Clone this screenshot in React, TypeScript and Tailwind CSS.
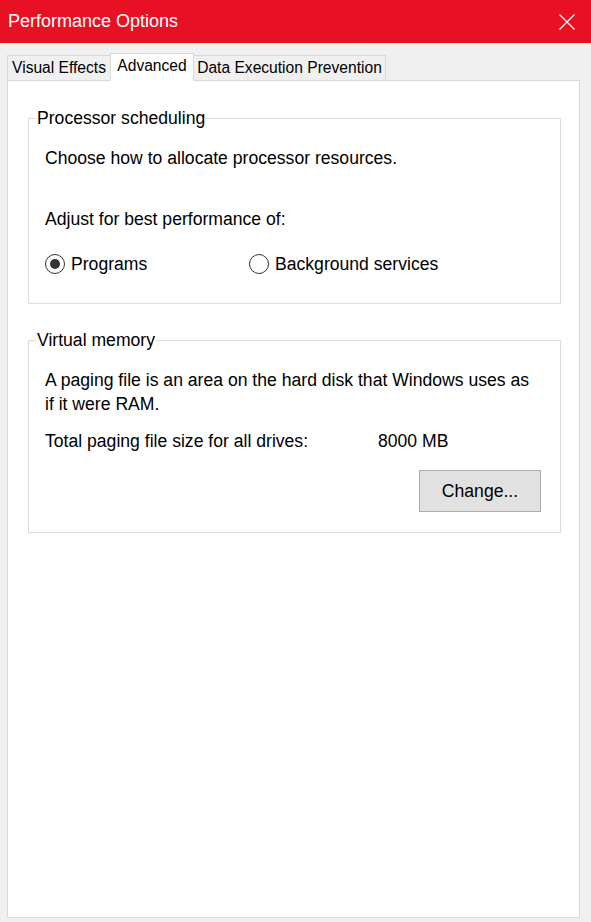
import { useState } from "react";

function Radio({ checked, label, onClick }: { checked: boolean; label: string; onClick: () => void }) {
	return (
		<button type="button" onClick={onClick} className="flex items-center gap-[6px] text-left">
			<span className="flex size-[20px] items-center justify-center rounded-full border border-[#333] bg-white">
				{checked && <span className="size-[10px] rounded-full bg-[#333]" />}
			</span>
			<span>{label}</span>
		</button>
	);
}

function GroupBox({ title, children, className }: { title: string; children: React.ReactNode; className?: string }) {
	return (
		<fieldset className={"ml-[20px] mr-[18px] border border-[#dcdcdc] px-[16px] " + (className ?? "")}>
			<legend className="-ml-[9px] px-[1px] leading-[22px]">{title}</legend>
			{children}
		</fieldset>
	);
}

const tabs = [
	{ label: "Visual Effects", width: "w-[104px]" },
	{ label: "Advanced", width: "w-[84px]" },
	{ label: "Data Execution Prevention", width: "w-[193px]" },
];

export default function App() {
	const [target, setTarget] = useState<"programs" | "services">("programs");

	return (
		<div className="flex h-[922px] w-[591px] flex-col bg-[#f0f0f0] font-['Liberation_Sans',sans-serif] text-[17.6px] text-black">
			<div className="flex h-[43px] shrink-0 items-center justify-between bg-[#e81123] pl-[8px] pr-[16px] text-white">
				<span className="text-[18px]">Performance Options</span>
				<svg width="16" height="16" viewBox="0 0 16 16">
					<path d="M0.5 0.5 L15.5 15.5 M15.5 0.5 L0.5 15.5" stroke="white" strokeWidth="1.2" />
				</svg>
			</div>

			<div className="flex items-end pl-[7px] pt-[10px] text-[15.6px]">
				{tabs.map((t, i) => {
					const active = t.label === "Advanced";
					return (
						<div
							key={t.label}
							className={
								(active
									? "relative z-10 -mb-px h-[28px] bg-white leading-[24px]"
									: "h-[25px] bg-[#f0f0f0] leading-[24px]") +
								" border border-b-0 border-[#d9d9d9] text-center " +
								t.width +
								(i > 0 ? " -ml-px" : "")
							}
						>
							{t.label}
						</div>
					);
				})}
			</div>

			<div className="mb-[4px] ml-[7px] flex w-[573px] flex-1 flex-col border border-[#d9d9d9] bg-white pt-[26px]">
				<GroupBox title="Processor scheduling" className="h-[197px]">
					<p className="mt-[17px] leading-[24px]">Choose how to allocate processor resources.</p>
					<p className="mt-[37px] leading-[24px]">Adjust for best performance of:</p>
					<div className="mt-[20px] flex">
						<div className="w-[204px]">
							<Radio checked={target === "programs"} label="Programs" onClick={() => setTarget("programs")} />
						</div>
						<Radio checked={target === "services"} label="Background services" onClick={() => setTarget("services")} />
					</div>
				</GroupBox>

				<GroupBox title="Virtual memory" className="mt-[25px] h-[204px]">
					<p className="mt-[17px] max-w-[490px] leading-[24px]">
						A paging file is an area on the hard disk that Windows uses as if it were RAM.
					</p>
					<div className="mt-[13px] flex leading-[24px]">
						<span className="w-[333px]">Total paging file size for all drives:</span>
						<span>8000 MB</span>
					</div>
					<div className="mt-[17px] flex justify-end pr-[3px]">
						<button type="button" className="h-[42px] w-[122px] border border-[#adadad] bg-[#e1e1e1]">
							Change...
						</button>
					</div>
				</GroupBox>
			</div>
		</div>
	);
}
